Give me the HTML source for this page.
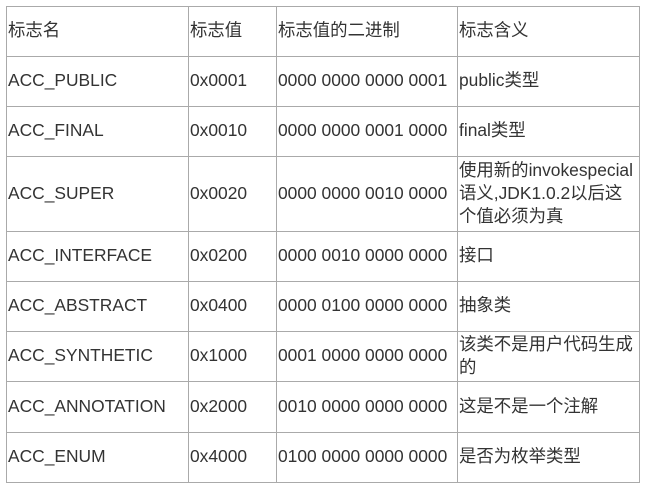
<!DOCTYPE html>
<html><head><meta charset="utf-8"><style>
body{margin:0;background:#fff;width:646px;height:489px;overflow:hidden;font-family:"Liberation Sans","Noto Sans CJK SC",sans-serif;font-size:17.4px;color:#333;}
table{position:absolute;left:6px;top:6px;border-collapse:collapse;table-layout:fixed;}
td{border:1px solid #aaa;padding:0 0 2px 1px;line-height:23px;vertical-align:middle;white-space:nowrap;overflow:visible;}
</style></head><body>
<table>
<colgroup><col style="width:182px"><col style="width:88px"><col style="width:181px"><col style="width:182px"></colgroup>
<tr style="height:50px"><td>标志名</td><td>标志值</td><td>标志值的二进制</td><td>标志含义</td></tr>
<tr style="height:50px"><td>ACC_PUBLIC</td><td>0x0001</td><td>0000 0000 0000 0001</td><td>public类型</td></tr>
<tr style="height:50px"><td>ACC_FINAL</td><td>0x0010</td><td>0000 0000 0001 0000</td><td>final类型</td></tr>
<tr style="height:75px"><td>ACC_SUPER</td><td>0x0020</td><td>0000 0000 0010 0000</td><td>使用新的invokespecial<br>语义,JDK1.0.2以后这<br>个值必须为真</td></tr>
<tr style="height:50px"><td>ACC_INTERFACE</td><td>0x0200</td><td>0000 0010 0000 0000</td><td>接口</td></tr>
<tr style="height:50px"><td>ACC_ABSTRACT</td><td>0x0400</td><td>0000 0100 0000 0000</td><td>抽象类</td></tr>
<tr style="height:50px"><td>ACC_SYNTHETIC</td><td>0x1000</td><td>0001 0000 0000 0000</td><td>该类不是用户代码生成<br>的</td></tr>
<tr style="height:51px"><td>ACC_ANNOTATION</td><td>0x2000</td><td>0010 0000 0000 0000</td><td>这是不是一个注解</td></tr>
<tr style="height:50px"><td>ACC_ENUM</td><td>0x4000</td><td>0100 0000 0000 0000</td><td>是否为枚举类型</td></tr>
</table>
</body></html>
